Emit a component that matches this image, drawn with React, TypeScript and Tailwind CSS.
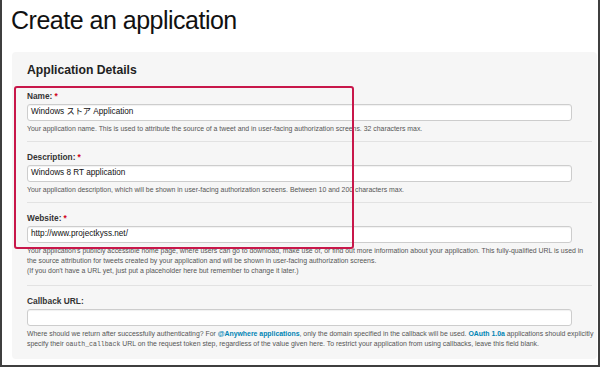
const sans = "font-['Liberation_Sans',Arial,'Noto_Sans_CJK_JP',sans-serif]";

function Req() {
  return <span className="text-[#d0021b] ml-[2px]">*</span>;
}

function Divider({ extra }: { extra?: boolean }) {
  return <div className={`h-px bg-[#e2e2e2] mb-[9px] ${extra ? "mt-[9px]" : "mt-[7px]"}`} />;
}

function Field({ label, value, required, big, children }: { label: string; value?: string; required?: boolean; big?: boolean; children: React.ReactNode }) {
  return (
    <div>
      <div className={`${sans} font-bold text-[#333] h-[12px] leading-[12px] ${big ? "text-[8.4px]" : "text-[8.3px]"}`}>
        {label}
        {required && <Req />}
      </div>
      <div className="mt-[2.5px] w-[545px] h-[17px] bg-white border border-[#cdcdcd] rounded-[3px] shadow-[inset_0_1px_1px_rgba(0,0,0,0.06)] pl-[3px] flex items-center">
        <span className={`${sans} text-[8.2px] text-[#111]`}>{value}</span>
      </div>
      <div className={`${sans} mt-[2.5px] text-[6.9px] leading-[10px] text-[#555] whitespace-nowrap`}>{children}</div>
    </div>
  );
}

export default function App() {
  return (
    <div className="relative w-[600px] h-[367px] bg-white border-x-2 border-b-2 border-[#3f3f3f] overflow-hidden">
      <h1 className="font-['Liberation_Sans',Arial,sans-serif] text-[25px] tracking-[-0.02em] text-[#111] h-[30px] leading-[30px] mt-[5px] pl-[9px]">
        Create an application
      </h1>

      <div className="mt-[17px] ml-[10px] mr-px bg-[#f6f6f6] rounded-[4px] pl-[15px] pr-[5px] pt-[7.5px] pb-[9px]">
        <h2 className="font-['Liberation_Sans',Arial,sans-serif] font-bold text-[12.2px] text-[#222] h-[20px] leading-[20px] mb-[10px]">
          Application Details
        </h2>

        <Field label="Name:" required value="Windows ストア Application">
          Your application name. This is used to attribute the source of a tweet and in user-facing authorization screens. 32 characters max.
        </Field>
        <Divider />
        <Field label="Description:" required value="Windows 8 RT application">
          Your application description, which will be shown in user-facing authorization screens. Between 10 and 200 characters max.
        </Field>
        <Divider />
        <Field label="Website:" required value="http://www.projectkyss.net/">
          Your application's publicly accessible home page, where users can go to download, make use of, or find out more information about your application. This fully-qualified URL is used in
          <br />
          the source attribution for tweets created by your application and will be shown in user-facing authorization screens.
          <br />
          (If you don't have a URL yet, just put a placeholder here but remember to change it later.)
        </Field>
        <Divider extra />
        <Field label="Callback URL:" big>
          Where should we return after successfully authenticating? For{" "}
          <span className="font-bold text-[#0084b4]">@Anywhere applications</span>, only the domain specified in the callback will be used.{" "}
          <span className="font-bold text-[#0084b4]">OAuth 1.0a</span> applications should explicitly
          <br />
          specify their <code className="font-['Liberation_Mono',monospace] text-[6.5px]">oauth_callback</code> URL on the request token step, regardless of the value given here. To restrict your application from using callbacks, leave this field blank.
        </Field>
      </div>

      <div className="absolute left-[12px] top-[86px] w-[340px] h-[163px] border-[2.5px] border-[#c8174a] rounded-[3px] pointer-events-none" />
    </div>
  );
}
